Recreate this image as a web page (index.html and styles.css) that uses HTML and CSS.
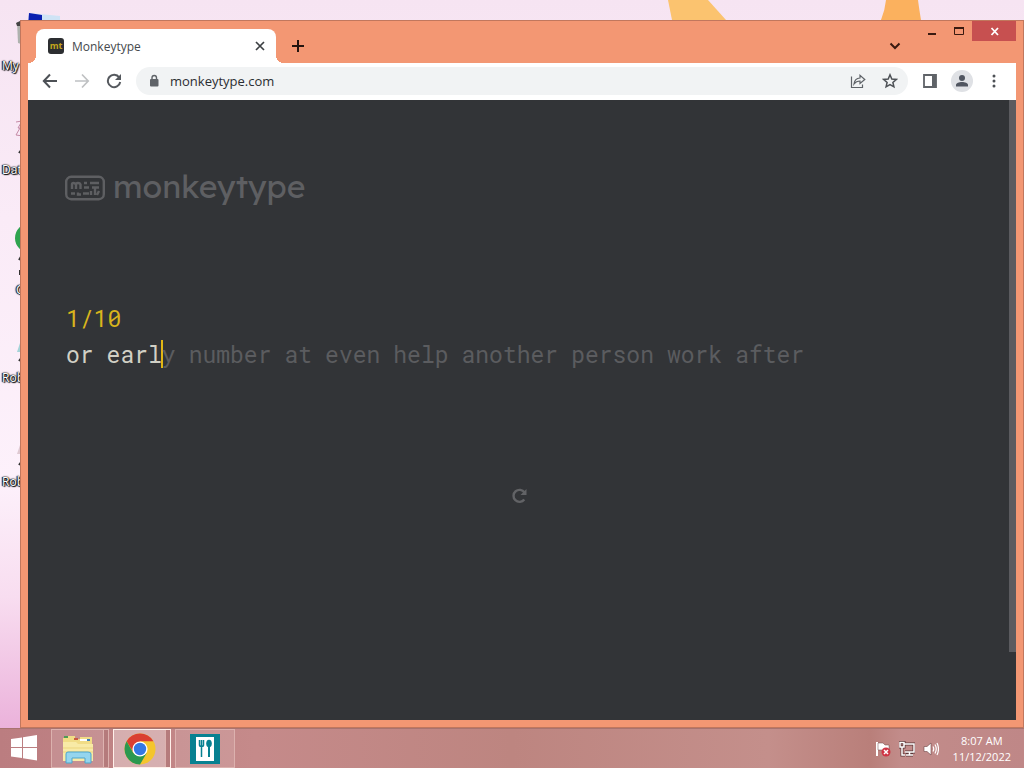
FILE: index.html
```html
<!DOCTYPE html>
<html lang="en">
<head>
    <meta charset="utf-8">
    <title>Monkeytype</title>
    <link rel="stylesheet" href="styles.css">
</head>
<body>
    <main class="desktop">
        <!-- wallpaper petals -->
        <svg class="petals" width="360" height="20" viewBox="0 0 360 20">
            <path d="M4 0H44L62 20H8Z" fill="#fbc36f"/>
            <path d="M222 0H254Q255 8 257 20H217Q221 10 222 0Z" fill="#fbb15e"/>
        </svg>

        <ul class="shortcuts">
            <li>
                <svg width="60" height="38" viewBox="0 0 60 38">
                    <path d="M29 3L60 6V16H28Z" fill="#cfe3f5"/>
                    <path d="M29 3L42 5V16H28Z" fill="#0a1fb0"/>
                    <path d="M17 12H24V35L18 33Z" fill="#aeb2ae"/>
                    <path d="M16 13L20 11V16H17Z" fill="#444"/>
                </svg>
                <span>My</span>
            </li>
            <li>
                <svg width="60" height="38" viewBox="0 0 60 38" fill="none" stroke="#c58aa5" stroke-width="1">
                    <path d="M16 8L22 7L18 14L23 14M20 14L16 21L23 22"/>
                    <path d="M19 39L22 35" stroke="#333" stroke-width="2"/>
                </svg>
                <span>Dat</span>
            </li>
            <li>
                <svg width="60" height="38" viewBox="0 0 60 38">
                    <circle cx="30" cy="20" r="15" fill="#2fa34f"/>
                    <path d="M19 42L22 37M20 57V52" stroke="#333" stroke-width="2"/>
                </svg>
                <span class="second-line">C</span>
            </li>
            <li>
                <svg width="60" height="38" viewBox="0 0 60 38">
                    <path d="M22 15L17 30H23Z" fill="#a4d3d8"/>
                    <path d="M19 39L22 35" stroke="#333" stroke-width="2"/>
                </svg>
                <span>Rob</span>
            </li>
            <li>
                <svg width="60" height="38" viewBox="0 0 60 38">
                    <path d="M22 13L17 28H23Z" fill="#dfc9d2"/>
                    <path d="M19 39L22 35" stroke="#333" stroke-width="2"/>
                </svg>
                <span>Rob</span>
            </li>
        </ul>

        <section class="window">
            <header class="titlebar">
                <div class="tab">
                    <svg class="favicon" width="16" height="16" viewBox="0 0 16 16">
                        <rect width="16" height="16" rx="3" fill="#2c2e31"/>
                        <text x="8" y="11" text-anchor="middle" class="favicon-text">mt</text>
                    </svg>
                    <span class="tab-title">Monkeytype</span>
                    <button class="icon-btn tab-close" aria-label="Close tab">
                        <svg width="16" height="16" viewBox="0 0 16 16"><path d="M4 4L12 12M12 4L4 12" stroke="#3c4043" stroke-width="1.7"/></svg>
                    </button>
                </div>
                <button class="icon-btn new-tab" aria-label="New tab">
                    <svg width="16" height="16" viewBox="0 0 16 16"><path d="M8 2V14M2 8H14" stroke="#24140f" stroke-width="2"/></svg>
                </button>
                <button class="icon-btn tab-search" aria-label="Search tabs">
                    <svg width="16" height="16" viewBox="0 0 16 16"><path d="M3.5 5.5L8 10L12.5 5.5" fill="none" stroke="#3a1a10" stroke-width="2"/></svg>
                </button>
                <div class="caption">
                    <button class="icon-btn" aria-label="Minimize">
                        <svg width="28" height="20" viewBox="0 0 28 20"><path d="M10 13H18" stroke="#3a1a10" stroke-width="2"/></svg>
                    </button>
                    <button class="icon-btn" aria-label="Maximize">
                        <svg width="26" height="20" viewBox="0 0 26 20"><path d="M8.5 6.5H17.5V13.5H8.5Z" fill="none" stroke="#3a1a10"/><path d="M8 7H18" stroke="#3a1a10" stroke-width="2"/></svg>
                    </button>
                    <button class="icon-btn close" aria-label="Close">
                        <svg width="44" height="20" viewBox="0 0 44 20"><path d="M19.5 7L26 14M26 7L19.5 14" stroke="#fff" stroke-width="1.8"/></svg>
                    </button>
                </div>
            </header>

            <nav class="toolbar">
                <button class="icon-btn" aria-label="Back">
                    <svg width="16" height="16" viewBox="0 0 16 16" fill="none" stroke="#4d5156" stroke-width="2"><path d="M15 8H2M8 1.5L1.8 8L8 14.5"/></svg>
                </button>
                <button class="icon-btn" aria-label="Forward">
                    <svg width="16" height="16" viewBox="0 0 16 16" fill="none" stroke="#bfc1c3" stroke-width="1.7"><path d="M1 8H14M8 1.5L14.2 8L8 14.5"/></svg>
                </button>
                <button class="icon-btn" aria-label="Reload">
                    <svg width="16" height="16" viewBox="0 0 16 16"><path d="M13.2 4.5A6.2 6.2 0 1 0 14.2 9" fill="none" stroke="#55595e" stroke-width="2"/><path d="M15 1V7H9Z" fill="#55595e"/></svg>
                </button>
                <div class="omnibox">
                    <svg width="12" height="14" viewBox="0 0 12 14"><rect x="2" y="5" width="8.5" height="7.5" rx="1" fill="#5f6368"/><path d="M4 6V3.7A2.25 2.25 0 0 1 8.5 3.7V6" fill="none" stroke="#5f6368" stroke-width="1.4"/></svg>
                    <input class="address" type="text" value="monkeytype.com" aria-label="Address">
                    <button class="icon-btn" aria-label="Share">
                        <svg width="16" height="16" viewBox="0 0 16 16" fill="none" stroke="#5f6368" stroke-width="1.2"><path d="M1.5 3.5V14.5H12.5V11.5"/><path d="M4 11C4.5 7 6.5 5.2 10 5V2.3L14.8 6.5L10 10.5V8C7.5 8 5.5 9 4 11Z"/></svg>
                    </button>
                    <button class="icon-btn" aria-label="Bookmark">
                        <svg width="16" height="16" viewBox="0 0 16 16"><path d="M8 1.8L9.8 6L14.3 6.4L10.9 9.4L11.9 13.8L8 11.5L4.1 13.8L5.1 9.4L1.7 6.4L6.2 6Z" fill="none" stroke="#4d5156" stroke-width="1.5"/></svg>
                    </button>
                </div>
                <button class="icon-btn" aria-label="Side panel">
                    <svg width="16" height="16" viewBox="0 0 16 16"><path d="M2 2H14V14H2Z" fill="none" stroke="#5f6368" stroke-width="1.8"/><path d="M10 2H14V14H10Z" fill="#5f6368"/></svg>
                </button>
                <button class="icon-btn profile" aria-label="Profile">
                    <svg width="16" height="16" viewBox="0 0 16 16" fill="#505560"><circle cx="8" cy="5" r="3"/><path d="M2 13.5V12C2 10 5 9 8 9S14 10 14 12V13.5Z"/></svg>
                </button>
                <button class="icon-btn" aria-label="Menu">
                    <svg width="16" height="16" viewBox="0 0 16 16" fill="#4d5156"><circle cx="8" cy="3" r="1.5"/><circle cx="8" cy="8" r="1.5"/><circle cx="8" cy="13" r="1.5"/></svg>
                </button>
            </nav>

            <div class="viewport">
                <div class="page">
                    <div class="logo">
                        <svg width="40" height="26" viewBox="0 0 40 26" fill="none" stroke="#5e5f62" stroke-width="2.4">
                            <rect x="1.2" y="1.8" width="37.6" height="22.4" rx="5"/>
                            <path d="M7 14V9.5Q7 8 8.5 8T11 9.5V14M11 9.5Q11 8 13 8T15.5 9.5V14M19 8H22M25 8H34M19 12.5H24M27 12.5H34M6 18.5H10M13 17.5V19.5H16M18 18.5H24M26 16V20M30 13V20M34 16L32 20"/>
                        </svg>
                        <span class="brand">monkeytype</span>
                    </div>
                    <div class="progress">1/10</div>
                    <div class="words">
                        <span class="typed">or</span>
                        <span><span class="typed">earl</span><span class="caret"></span>y</span>
                        <span>number</span>
                        <span>at</span>
                        <span>even</span>
                        <span>help</span>
                        <span>another</span>
                        <span>person</span>
                        <span>work</span>
                        <span>after</span>
                    </div>
                    <button class="icon-btn restart" aria-label="Restart test">
                        <svg width="16" height="16" viewBox="0 0 16 16"><path d="M13.5 4.5A6 6 0 1 0 13.3 11.5" fill="none" stroke="#626366" stroke-width="2.4"/><path d="M15.5 1V7H9.5Z" fill="#626366"/></svg>
                    </button>
                </div>
                <div class="scrollbar"><div class="thumb"></div></div>
            </div>
        </section>
    </main>

    <footer class="taskbar">
        <button class="icon-btn start" aria-label="Start">
            <svg width="28" height="28" viewBox="0 0 28 28" fill="#fff"><path d="M1 4L12 2.4V12H1ZM13 2.2L27 0V12H13ZM1 13H12V23L1 21.5ZM13 13H27V25.5L13 23.2Z"/></svg>
        </button>
        <button class="task stacked" aria-label="File Explorer">
            <svg width="34" height="32" viewBox="0 0 34 32">
                <path d="M2 5H6V3H14V6H19V4H31V28H2Z" fill="#f1dc86"/>
                <path d="M2 9H15L17 11H32V28H2Z" fill="#f8eaa6"/>
                <path d="M3 3H7V5H3Z" fill="#4d9b55"/><path d="M13 5H17V7H13Z" fill="#ca5b43"/><path d="M19 6H28V8H19Z" fill="#fff"/><path d="M26 6H29V8H26Z" fill="#3c80b6"/>
                <path d="M2 15H32M2 19H32" stroke="#ecd57f"/>
                <path d="M5 30V21Q5 19 7 19H27Q30 19 30 21V30H24V25H11V30Z" fill="#94d5ee" stroke="#4da5cc"/>
            </svg>
        </button>
        <button class="task stacked active" aria-label="Google Chrome">
            <svg width="32" height="32" viewBox="0 0 32 32">
                <circle cx="16" cy="16" r="15.5" fill="#f4c52d"/>
                <path d="M2.6 8.25A15.5 15.5 0 0 1 29.4 8.25H16L9.5 19.5Z" fill="#da3f32"/>
                <path d="M2.6 8.25A15.5 15.5 0 0 0 16 31.5L22.7 19.9Q16 25 9.3 19.9Z" fill="#2b9850"/>
                <circle cx="16" cy="16" r="7.6" fill="#fff"/>
                <circle cx="16" cy="16" r="6.2" fill="#3478e3"/>
            </svg>
        </button>
        <button class="task" aria-label="Recipes">
            <svg width="30" height="30" viewBox="0 0 30 30">
                <rect width="30" height="30" fill="#078191"/>
                <rect x="6" y="3" width="18" height="24" fill="#fff"/>
                <path d="M9.5 6V11Q9.5 12.5 11.5 12.5T13.5 11V6M11.5 6V23" fill="none" stroke="#078191" stroke-width="1.5"/>
                <ellipse cx="19" cy="9.5" rx="2.8" ry="3.8" fill="#078191"/><path d="M19 12V23" stroke="#078191" stroke-width="2"/>
            </svg>
        </button>

        <div class="tray">
            <svg width="16" height="16" viewBox="0 0 16 16">
                <path d="M2 1V15" stroke="#fff" stroke-width="2"/><path d="M3 2H8L10 4H14V10H9L7 9H3Z" fill="#fff" stroke="#6d4545" stroke-width=".5"/>
                <circle cx="11" cy="11" r="4.5" fill="#cf3444"/><path d="M9 9L13 13M13 9L9 13" stroke="#fff" stroke-width="1.5"/>
            </svg>
            <svg width="16" height="16" viewBox="0 0 16 16" fill="none">
                <path d="M5 3H15V11H6M7 14H14M10.5 11V14M3 6V14H6M1 1.5H5V6H1Z" stroke="#5a3636" stroke-width="3"/>
                <path d="M5 3H15V11H6M7 14H14M10.5 11V14M3 6V14H6M1 1.5H5V6H1Z" stroke="#fff" stroke-width="1.5"/>
            </svg>
            <svg width="16" height="16" viewBox="0 0 16 16">
                <path d="M1 5.5H4L8 2V14L4 10.5H1Z" fill="#fff" stroke="#6d4545" stroke-width=".6"/>
                <path d="M10 5.5Q11.5 8 10 10.5M12 3.5Q14.5 8 12 12.5M14 2Q17 8 14 14" fill="none" stroke="#fff" stroke-width="1.2"/>
            </svg>
            <time class="clock" datetime="2022-11-12T08:07"><span>8:07 AM</span><span>11/12/2022</span></time>
        </div>
    </footer>
</body>
</html>
```

FILE: styles.css
```css
* {
    box-sizing: border-box;
}

body {
    margin: 0;
    height: 100vh;
    display: flex;
    flex-direction: column;
    overflow: hidden;
    font-family: "Open Sans", "Noto Sans", sans-serif;
    font-size: 12px;
}

svg {
    display: block;
    flex: none;
}

.icon-btn {
    display: flex;
    align-items: center;
    justify-content: center;
    padding: 0;
    border: 0;
    background: none;
}

/* desktop */
.desktop {
    position: relative;
    flex: 1;
    overflow: hidden;
    background: linear-gradient(#f6e4f2, #faebf7 30%, #fdf1fb 66%, #f8ddf0 82%, #ebb2db);
}

.petals {
    position: absolute;
    top: 0;
    right: 0;
}

.shortcuts {
    margin: 0;
    padding: 10px 0 0;
    list-style: none;
}

.shortcuts li {
    height: 104px;
}

.shortcuts svg {
    margin-bottom: 10px;
    overflow: visible;
}

.shortcuts span {
    display: block;
    padding-left: 2px;
    line-height: 16px;
    color: #fff;
    text-shadow: 0 0 1px #000, 1px 1px 1px #000, -1px 0 1px #000, 0 0 2px #000;
}

.shortcuts .second-line {
    padding: 16px 0 0 16px;
}

/* browser window */
.window {
    position: absolute;
    top: 20px;
    right: 0;
    bottom: 0;
    left: 20px;
    display: flex;
    flex-direction: column;
    padding: 0 7px 7px;
    border: 1px solid #c1775d;
    background: #f39773;
}

.titlebar {
    display: flex;
    align-items: flex-start;
    height: 42px;
}

.tab {
    position: relative;
    display: flex;
    align-items: center;
    gap: 8px;
    width: 240px;
    height: 34px;
    margin: 8px 0 0 8px;
    padding: 0 8px 0 12px;
    border-radius: 8px 8px 0 0;
    background: #fff;
}

.tab::before,
.tab::after {
    content: "";
    position: absolute;
    bottom: 0;
    width: 8px;
    height: 8px;
}

.tab::before {
    right: 100%;
    background: radial-gradient(circle at 0 0, transparent 8px, #fff 8px);
}

.tab::after {
    left: 100%;
    background: radial-gradient(circle at 100% 0, transparent 8px, #fff 8px);
}

.favicon-text {
    font-size: 9px;
    font-weight: bold;
    fill: #c5a51c;
}

.tab-title {
    flex: 1;
    color: #45494d;
}

.new-tab,
.tab-search {
    margin: 17px 0 0 14px;
}

.tab-search {
    margin-left: auto;
}

.caption {
    display: flex;
    margin-left: 15px;
}

.close {
    background: #c75050;
}

.toolbar {
    display: flex;
    align-items: center;
    gap: 16px;
    height: 37px;
    padding: 0 14px 2px;
    background: #fff;
}

.omnibox {
    flex: 1;
    display: flex;
    align-items: center;
    gap: 16px;
    height: 28px;
    margin: 0 -2px;
    padding: 0 10px 0 12px;
    border-radius: 14px;
    background: #f1f3f4;
}

.address {
    flex: 1;
    min-width: 0;
    margin-left: -6px;
    padding: 0;
    border: 0;
    outline: 0;
    background: none;
    font: 13px "Open Sans", "Noto Sans", sans-serif;
    color: #2b2e32;
}

.profile {
    width: 22px;
    height: 22px;
    margin: 0 -3px;
    border-radius: 50%;
    background: #dfe1e5;
}

/* typing test */
.viewport {
    flex: 1;
    display: flex;
    min-height: 0;
    background: #323437;
}

.page {
    flex: 1;
    padding: 68px 38px 0;
    color: #5b5c5f;
}

.logo {
    display: flex;
    align-items: center;
    gap: 8px;
    height: 40px;
    margin-left: -1px;
    color: #5e5f62;
}

.brand {
    padding-bottom: 5px;
    font-family: Lexend, Lato, sans-serif;
    font-size: 32px;
    line-height: 40px;
}

.progress,
.words {
    font-family: "Roboto Mono", "Liberation Mono", monospace;
    font-size: 23px;
    line-height: 36px;
}

.progress {
    margin-top: 92px;
    color: #d9b51c;
}

.words {
    display: flex;
    flex-wrap: wrap;
    column-gap: 13px;
}

.typed {
    color: #d1d0c5;
}

.caret {
    display: inline-block;
    width: 2px;
    height: 28px;
    margin: 0 -1px;
    vertical-align: -5px;
    background: #e2b714;
}

.restart {
    margin: 116px auto 0;
}

.scrollbar {
    width: 7px;
}

.thumb {
    height: 89%;
    background: #5b5b5f;
}

/* taskbar */
.taskbar {
    display: flex;
    gap: 4px;
    height: 40px;
    padding-left: 10px;
    border-top: 1px solid #a87370;
    background: linear-gradient(90deg, #bb7d80, #c58a8a 25%, #bd8580 50%, #c48f8b 75%, #b97f7a 85%, #c28c8a 88%, #bf8787);
}

.start {
    margin-right: 9px;
}

.task {
    display: flex;
    align-items: center;
    justify-content: center;
    width: 60px;
    padding: 0;
    border: 1px solid #dcb1ae;
    background: rgba(255, 255, 255, .12);
}

.stacked {
    width: 58px;
    padding-right: 4px;
    box-shadow: inset -4px 0 0 #b57b7c, inset -5px 0 0 #ddb3b0;
}

.active {
    border: 1px solid #fff0ea;
    background: rgba(255, 255, 255, .35);
}

.tray {
    display: flex;
    align-items: center;
    gap: 8px;
    margin-left: auto;
    padding-right: 13px;
    color: #fff;
}

.clock {
    display: flex;
    flex-direction: column;
    margin-left: 6px;
    text-align: center;
    font-size: 11px;
    line-height: 16px;
}
```
